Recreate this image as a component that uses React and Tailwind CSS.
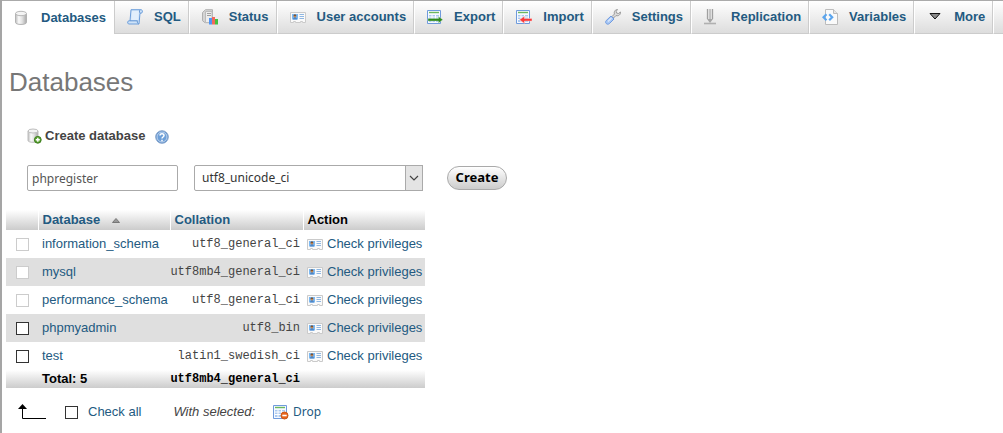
import { useState } from 'react'

const DatabaseIcon = () => (
  <svg width="16" height="16" viewBox="0 0 16 16" className="shrink-0">
    <defs>
      <linearGradient id="dbBody" x1="0" x2="1" y1="0" y2="0">
        <stop offset="0" stopColor="#bcbcbc" />
        <stop offset=".3" stopColor="#fafafa" />
        <stop offset=".6" stopColor="#e2e2e2" />
        <stop offset="1" stopColor="#a8a8a8" />
      </linearGradient>
    </defs>
    <path d="M1.500 3.500v9c0 2.600 11 2.600 11 0v-9" fill="url(#dbBody)" stroke="#b3b3b3" />
    <ellipse cx="7" cy="3.500" rx="5.500" ry="2.200" fill="#f4f4f4" stroke="#b8b8b8" />
  </svg>
)

const DatabaseAddIcon = () => (
  <svg width="16" height="16" viewBox="0 0 16 16" className="shrink-0">
    <path d="M1 3v9.500c0 2.400 10 2.400 10 0V3" fill="url(#dbBody)" stroke="#bdbdbd" />
    <ellipse cx="6" cy="3" rx="5" ry="2" fill="#f4f4f4" stroke="#bdbdbd" />
    <circle cx="10.800" cy="11.800" r="3.400" fill="#5da334" stroke="#3c7d1c" />
    <path d="M10.800 9.800v4M8.800 11.800h4" stroke="#fff" strokeWidth="1.400" />
  </svg>
)

const SqlIcon = () => (
  <svg width="16" height="16" viewBox="0 0 16 16" className="shrink-0">
    <path d="M4 .7h10.500c1.500 1.200 1 3.500-.5 3.500h-1L12 15H1.500C.2 14 .5 11.800 2 11.800h1L4 .7z" fill="#cfe3f8" stroke="#6c9edb" />
    <path d="M5 2h7l-1 9.500H4.200z" fill="#e2effc" />
    <path d="M3 11.800h7.500c-.5 1 0 2.500 1 3M12.800 1.200c-.5 1-.5 2.300.5 3" fill="none" stroke="#5b8fd0" />
  </svg>
)

const StatusIcon = () => (
  <svg width="16" height="16" viewBox="0 0 16 16" className="shrink-0">
    <path d="M.5 3.500L3.500.7h7v13h-7.500l-2.500-2z" fill="#d4d4d4" stroke="#b0b0b0" />
    <path d="M3.500 2.500h6.500v11H3.500z" fill="#ededed" stroke="#bcbcbc" />
    <path d="M5 4.500h4M5 6.500h4" stroke="#a0a0a0" />
    <path d="M7 9h3v6.500H7z" fill="#4f95f5" />
    <path d="M10 8h3v7.500h-3z" fill="#f4695a" />
    <path d="M13 10h3v5.500h-3z" fill="#45c040" />
  </svg>
)

const UserIcon = () => (
  <svg width="16" height="16" viewBox="0 0 16 16" className="shrink-0">
    <path d="M.5 3.500h15v10h-3v-1h-2v1h-5v-1h-2v1h-3z" fill="#fafafa" stroke="#cacaca" />
    <path d="M2 5h6v5.500H2z" fill="#7cb9f2" />
    <path d="M3 10.500c0-3.400 4-3.400 4 0z" fill="#4c86c8" />
    <circle cx="4.900" cy="7.200" r="1.300" fill="#c08652" />
    <path d="M3.500 6.800c0-1.800 2.800-1.800 2.800 0z" fill="#71401c" />
    <path d="M9.500 5.500H14M9.500 7.500H14M9.500 9.500H14" stroke="#8fb7e2" />
  </svg>
)

const SheetLines = () => (
  <>
    <path d="M.5 1.500h13v13H.5z" fill="#f5f9ff" stroke="#6f9bdc" />
    <path d="M2 3.500h10" stroke="#6cb85e" strokeWidth="1.400" />
    <path d="M2 6h10v7H2z" fill="#aac9f0" />
    <path d="M2 8h10M2 10.500h10M5 6v7M8.500 6v7" stroke="#fff" />
  </>
)

const ExportIcon = () => (
  <svg width="16" height="16" viewBox="0 0 16 16" className="shrink-0">
    <SheetLines />
    <path d="M1 9.500h10.500V7.500l4.300 3.200-4.300 3.200V12H1z" fill="#2f8a1d" stroke="#cbe5c5" strokeWidth=".4" />
  </svg>
)

const ImportIcon = () => (
  <svg width="16" height="16" viewBox="0 0 16 16" className="shrink-0">
    <SheetLines />
    <path d="M16 9.500H8.500V7.200L3.500 10.800l5 3.600v-2.300H16z" fill="#f83a3a" stroke="#ffd0d0" strokeWidth=".5" />
  </svg>
)

const SettingsIcon = () => (
  <svg width="16" height="16" viewBox="0 0 16 16" className="shrink-0">
    <path d="M12.500.5c-2 0-4 2-3 4.500L7 7.500 8.500 9 11 6.500c2.500 1 4.800-1 4.500-3.500l-2 1.500-2-.5-.3-1.700z" fill="#dcdcdc" stroke="#9a9a9a" />
    <path d="M6 7L1.200 11.600c-1.800 2.200 1 4.800 3.200 3L9 10z" fill="#a9c8f5" stroke="#6f9ae0" />
    <path d="M6.500 9L3 12.500" stroke="#dce9fc" strokeWidth="1.200" />
  </svg>
)

const ReplicationIcon = () => (
  <svg width="16" height="16" viewBox="0 0 16 16" className="shrink-0">
    <path d="M3.500 0v10M6 0v12M8.500 0v10" stroke="#a0a0a0" strokeWidth="1.300" />
    <path d="M4.800 0v11M7.300 0v11" stroke="#dedede" />
    <path d="M3 10l3 4 3-4z" fill="#a5a5a5" />
    <path d="M0 14.500h12" stroke="#b0b0b0" strokeWidth="1.600" />
  </svg>
)

const VariablesIcon = () => (
  <svg width="16" height="16" viewBox="0 0 16 16" className="shrink-0">
    <path d="M3.500.5h8l4 4v11h-12z" fill="#fafafa" stroke="#bcbcbc" />
    <path d="M11.500.5v4h4" fill="#e6e6e6" stroke="#bcbcbc" />
    <path d="M4.500 5.300L1.500 8.300l3 3M7.200 5.300l3 3-3 3" fill="none" stroke="#5ba5ee" strokeWidth="2.200" />
  </svg>
)

const MoreIcon = () => (
  <svg width="16" height="16" viewBox="0 0 16 16" className="shrink-0">
    <path d="M3 4.500h10L8 10z" fill="#8a8a8a" stroke="#111" />
  </svg>
)

const HelpIcon = () => (
  <svg width="14" height="14" viewBox="0 0 14 14">
    <circle cx="7" cy="7" r="6.300" fill="#5287c6" stroke="#86a5cc" />
    <circle cx="7" cy="7" r="5" fill="#6d9fd8" stroke="#d7e5f5" strokeWidth=".8" />
    <path d="M5 5.500c0-2.500 4-2.500 4 0C9 7 7 7 7 8.500M7 9.700v1.500" fill="none" stroke="#fff" strokeWidth="1.500" />
  </svg>
)

const DropIcon = () => (
  <svg width="16" height="16" viewBox="0 0 16 16" className="shrink-0">
    <SheetLines />
    <circle cx="11.500" cy="11.500" r="3.500" fill="#e8641b" stroke="#c9581a" />
    <path d="M9.300 11.500h4.400" stroke="#fff" strokeWidth="1.600" />
  </svg>
)

const tabs = [
  { label: 'Databases', icon: DatabaseIcon, active: true },
  { label: 'SQL', icon: SqlIcon },
  { label: 'Status', icon: StatusIcon },
  { label: 'User accounts', icon: UserIcon },
  { label: 'Export', icon: ExportIcon },
  { label: 'Import', icon: ImportIcon },
  { label: 'Settings', icon: SettingsIcon },
  { label: 'Replication', icon: ReplicationIcon },
  { label: 'Variables', icon: VariablesIcon },
  { label: 'More', icon: MoreIcon },
]

const databases = [
  { name: 'information_schema', collation: 'utf8_general_ci', locked: true },
  { name: 'mysql', collation: 'utf8mb4_general_ci', locked: true },
  { name: 'performance_schema', collation: 'utf8_general_ci', locked: true },
  { name: 'phpmyadmin', collation: 'utf8_bin' },
  { name: 'test', collation: 'latin1_swedish_ci' },
]

const checkbox =
  'block size-[13px] appearance-none border border-[#333] bg-white checked:bg-[#235a81] disabled:border-[#ccc]'

export default function App() {
  const [name, setName] = useState('phpregister')
  const [collation, setCollation] = useState('utf8_unicode_ci')
  const [selected, setSelected] = useState([])

  const selectable = databases.filter((db) => !db.locked).map((db) => db.name)

  const toggle = (db) => {
    setSelected(selected.includes(db) ? selected.filter((s) => s !== db) : [...selected, db])
  }

  return (
    <div className="min-h-screen border-l-2 border-[#a5a5a5] bg-white font-['Liberation_Sans',Arial,sans-serif] text-[13px] leading-4 text-[#444]">
      <nav className="flex border-t border-t-[#aaa] bg-linear-to-b from-white to-[#dcdcdc]">
        {tabs.map(({ label, icon: Icon, active }) => (
          <a
            key={label}
            href="#"
            className={`flex h-[33px] items-center gap-[11px] whitespace-nowrap border-r pr-2 pl-3 font-bold text-[#235a81] ${
              active ? 'border-[#ccc] bg-white' : 'border-b border-r-white border-b-[#ccc] shadow-[inset_-1px_0_0_#ccc]'
            }`}
          >
            <Icon />
            {label}
          </a>
        ))}
        <div className="grow border-b border-[#ccc]" />
      </nav>

      <main className="pl-1">
        <h1 className="mt-8 pl-[3px] text-[26px] leading-8 text-[#777]">Databases</h1>

        <form className="mt-7 pl-[21px]" onSubmit={(e) => e.preventDefault()}>
          <div className="flex h-5 items-center gap-[2px]">
            <DatabaseAddIcon />
            <label htmlFor="new-db" className="font-bold">Create database</label>
            <a href="#" aria-label="Documentation" className="ml-2 pt-[2px]">
              <HelpIcon />
            </a>
          </div>
          <div className="mt-[19px] flex items-center font-['Noto_Sans',sans-serif] text-xs">
            <input
              id="new-db"
              type="text"
              value={name}
              onChange={(e) => setName(e.target.value)}
              className="h-[26px] w-[151px] rounded-xs border border-[#aaa] px-1 text-[#555]"
            />
            <div className="relative ml-4">
              <select
                aria-label="Collation"
                value={collation}
                onChange={(e) => setCollation(e.target.value)}
                className="block h-[26px] w-[229px] appearance-none rounded-xs border border-[#aaa] bg-white px-[7px] text-[#333]"
              >
                <option>utf8_unicode_ci</option>
                <option>utf8_general_ci</option>
                <option>utf8mb4_general_ci</option>
              </select>
              <span className="pointer-events-none absolute inset-y-0 right-0 flex w-[18px] items-center justify-center border border-[#aaa] bg-[#e4e4e4]">
                <svg width="10" height="6" viewBox="0 0 10 6">
                  <path d="M1 1l4 4 4-4" fill="none" stroke="#444" strokeWidth="1.200" />
                </svg>
              </span>
            </div>
            <button
              type="submit"
              className="ml-6 h-6 w-[60px] rounded-full border border-[#aaa] bg-linear-to-b from-white to-[#ccc] text-[13px] font-bold text-black"
            >
              Create
            </button>
          </div>
        </form>

        <table className="mt-[19px] w-[419px] table-fixed border-collapse">
          <colgroup>
            <col className="w-8" />
            <col className="w-[132px]" />
            <col className="w-[133px]" />
            <col />
          </colgroup>
          <thead>
            <tr className="h-5 bg-linear-to-b from-white to-[#ccc] text-left text-[#235a81]">
              <th className="border-r border-white p-0" />
              <th className="border-r border-white p-0 pl-1">
                <a href="#" className="flex items-center gap-3">
                  Database
                  <svg width="8" height="5" viewBox="0 0 8 5">
                    <path d="M.5 4.500L4 .5l3.500 4z" fill="#999" stroke="#777" />
                  </svg>
                </a>
              </th>
              <th className="border-r border-white p-0 pl-1"><a href="#">Collation</a></th>
              <th className="p-0 pl-1 text-black">Action</th>
            </tr>
          </thead>
          <tbody>
            {databases.map((db) => (
              <tr key={db.name} className="h-7 even:bg-[#dfdfdf]">
                <td className="p-0 pl-2.5">
                  <input
                    type="checkbox"
                    aria-label={db.name}
                    disabled={db.locked}
                    checked={selected.includes(db.name)}
                    onChange={() => toggle(db.name)}
                    className={checkbox}
                  />
                </td>
                <td className="p-0 pl-1"><a href="#" className="text-[#235a81]">{db.name}</a></td>
                <td className="p-0 pr-[3px] text-right font-['Liberation_Mono',monospace] text-xs">{db.collation}</td>
                <td className="p-0 pl-1">
                  <a href="#" className="flex items-center gap-1 whitespace-nowrap text-[#235a81]">
                    <UserIcon />
                    Check privileges
                  </a>
                </td>
              </tr>
            ))}
          </tbody>
          <tfoot>
            <tr className="h-[18px] bg-linear-to-b from-white to-[#ccc] text-left text-black">
              <th className="p-0" />
              <th className="p-0 pl-1">Total: 5</th>
              <th className="p-0 pr-[3px] text-right font-['Liberation_Mono',monospace] text-xs">utf8mb4_general_ci</th>
              <th className="p-0" />
            </tr>
          </tfoot>
        </table>

        <div className="mt-4 flex items-center pl-3">
          <svg width="28" height="16" viewBox="0 0 28 16">
            <path d="M4.500 3v11.500H28" fill="none" stroke="#000" />
            <path d="M0 5l4.500-5L9 5z" />
          </svg>
          <label className="ml-[19px] flex items-center gap-2.5 text-[#235a81]">
            <input
              type="checkbox"
              checked={selected.length === selectable.length}
              onChange={(e) => setSelected(e.target.checked ? selectable : [])}
              className={checkbox}
            />
            Check all
          </label>
          <i className="ml-8">With selected:</i>
          <button type="button" className="ml-[18px] flex items-center gap-1 font-['Noto_Sans',sans-serif] text-xs text-[#235a81]">
            <DropIcon />
            Drop
          </button>
        </div>
      </main>
    </div>
  )
}
